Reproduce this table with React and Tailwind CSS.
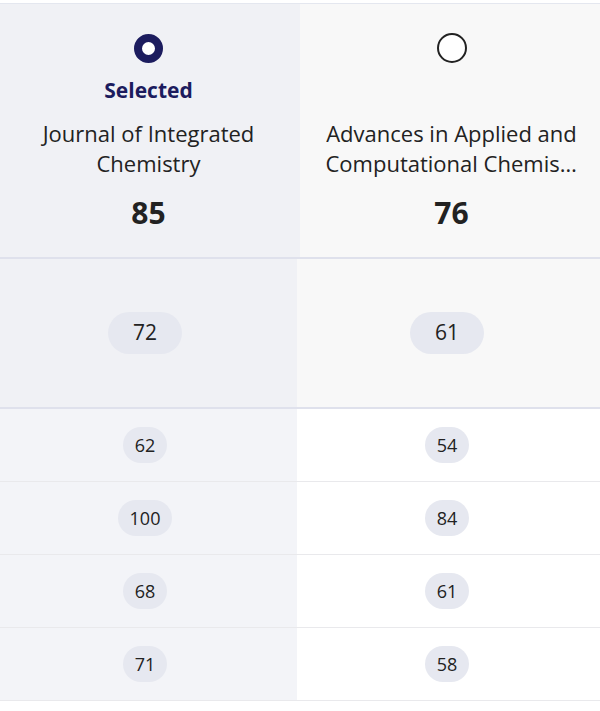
const JOURNALS = [
  { lines: ['Journal of Integrated', 'Chemistry'], score: 85, selected: true },
  { lines: ['Advances in Applied and', 'Computational Chemistry'], score: 76, selected: false },
]

const MAIN_ROW = [72, 61]

const ROWS = [
  [62, 54],
  [100, 84],
  [68, 61],
  [71, 58],
]

function Radio({ checked }) {
  if (checked) {
    return <div className="w-[29px] h-[29px] rounded-full border-[8px] border-[#1c1c5e] bg-white" />
  }
  return <div className="w-[30px] h-[30px] rounded-full border-2 border-[#222] bg-white" />
}

function Pill({ value, big }) {
  return big ? (
    <span className="inline-flex items-center justify-center h-[42px] px-[25px] rounded-full bg-[#e6e8f0] text-[21px] text-[#222]">
      {value}
    </span>
  ) : (
    <span className="inline-flex items-center justify-center h-[36px] px-[12px] rounded-full bg-[#e6e8f0] text-[18px] text-[#222]">
      {value}
    </span>
  )
}

export default function App() {
  return (
    <div className="w-[600px] h-[711px] bg-white pt-[3px] font-['Open_Sans',sans-serif] text-[#222]">
      <div className="border-t border-[#e4e7ef]">
        {/* header */}
        <div className="grid grid-cols-[300px_300px] border-b-2 border-[#dfe1ec]">
          {JOURNALS.map((j, i) => (
            <div
              key={i}
              className={`flex flex-col items-center pt-[29px] pb-[26px] ${j.selected ? 'bg-[#f0f1f5] pr-[3px]' : 'bg-[#f8f8f8] pl-[3px]'}`}
            >
              <div className="h-[30px] flex items-center justify-center">
                <Radio checked={j.selected} />
              </div>
              <div className="mt-[12px] h-[30px] leading-[30px] text-[21px] font-bold text-[#1c1c5e]">
                {j.selected ? 'Selected' : ''}
              </div>
              <div className="mt-[13px] w-[252px] text-[22px] leading-[30px] text-center">
                {j.lines.map(l => (
                  <p key={l} className="truncate">{l}</p>
                ))}
              </div>
              <p className="mt-[17px] text-[30px] leading-[36px] font-bold">{j.score}</p>
            </div>
          ))}
        </div>

        {/* main metric */}
        <div className="grid grid-cols-[297px_303px] border-b-2 border-[#dfe1ec]">
          <div className="h-[148px] bg-[#f0f1f5] pr-[7px] flex items-center justify-center">
            <Pill value={MAIN_ROW[0]} big />
          </div>
          <div className="h-[148px] bg-[#f8f8f8] pr-[3px] flex items-center justify-center">
            <Pill value={MAIN_ROW[1]} big />
          </div>
        </div>

        {/* sub metrics */}
        {ROWS.map((r, i) => (
          <div key={i} className="grid grid-cols-[297px_303px] border-b border-[#e9e9ec]">
            <div className="h-[72px] bg-[#f3f4f8] pr-[7px] flex items-center justify-center">
              <Pill value={r[0]} />
            </div>
            <div className="h-[72px] bg-white pr-[3px] flex items-center justify-center">
              <Pill value={r[1]} />
            </div>
          </div>
        ))}
      </div>
    </div>
  )
}
